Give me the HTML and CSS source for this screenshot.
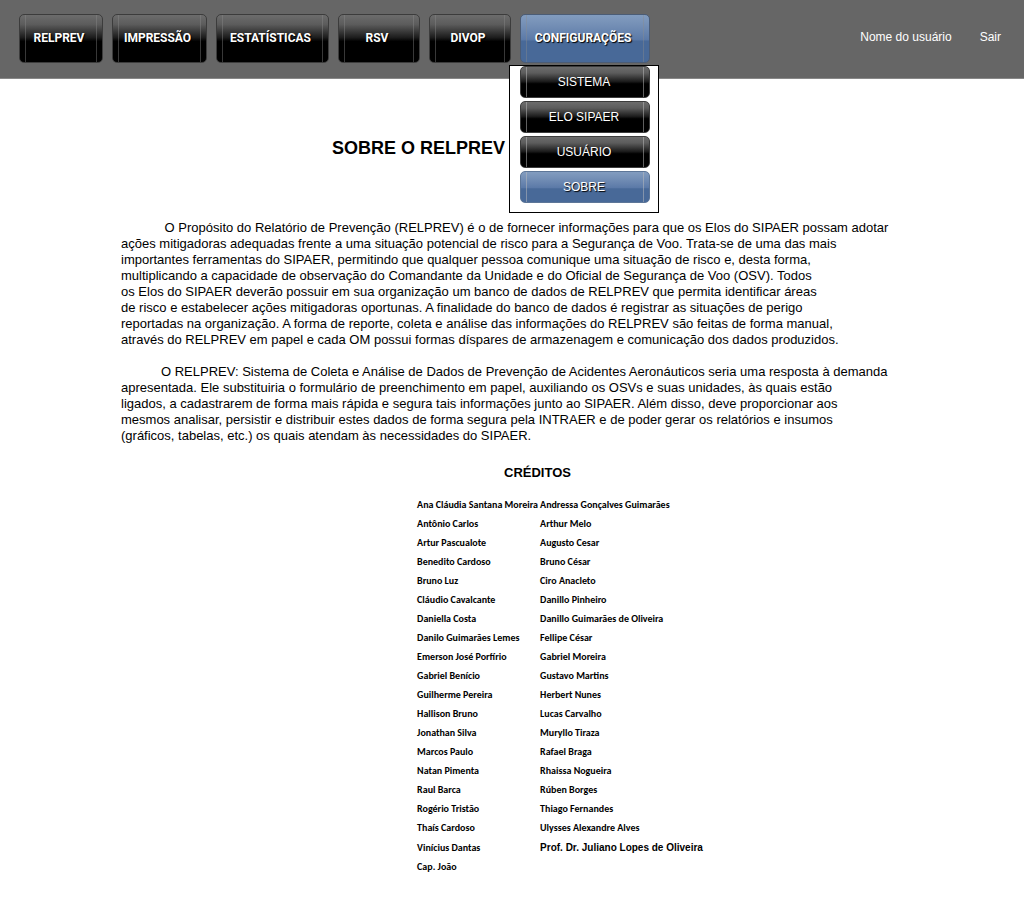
FILE: index.html
```html
<!DOCTYPE html>
<html lang="pt-BR">
<head>
<meta charset="utf-8">
<title>Sobre o RELPREV</title>
<link rel="stylesheet" href="styles.css">
</head>
<body>
<header class="topbar">
  <nav>
    <ul class="menu">
      <li><a class="tab tab-relprev" href="#">RELPREV</a></li>
      <li><a class="tab tab-impressao" href="#">IMPRESSÃO</a></li>
      <li><a class="tab tab-estatisticas" href="#">ESTATÍSTICAS</a></li>
      <li><a class="tab" href="#">RSV</a></li>
      <li><a class="tab" href="#">DIVOP</a></li>
      <li class="has-submenu">
        <a class="tab tab-config active" href="#">CONFIGURAÇÕES</a>
        <ul class="submenu">
          <li><a class="subitem" href="#">SISTEMA</a></li>
          <li><a class="subitem" href="#">ELO SIPAER</a></li>
          <li><a class="subitem" href="#">USUÁRIO</a></li>
          <li><a class="subitem active" href="#">SOBRE</a></li>
        </ul>
      </li>
    </ul>
  </nav>
  <div class="user">
    <a href="#">Nome do usuário</a>
    <a href="#">Sair</a>
  </div>
</header>
<main class="content">
  <h1 class="title">SOBRE O RELPREV</h1>
  <p class="text">&nbsp;O Propósito do Relatório de Prevenção (RELPREV) é o de fornecer informações para que os Elos do SIPAER possam adotar<br>
ações mitigadoras adequadas frente a uma situação potencial de risco para a Segurança de Voo. Trata-se de uma das mais<br>
importantes ferramentas do SIPAER, permitindo que qualquer pessoa comunique uma situação de risco e, desta forma,<br>
multiplicando a capacidade de observação do Comandante da Unidade e do Oficial de Segurança de Voo (OSV). Todos<br>
os Elos do SIPAER deverão possuir em sua organização um banco de dados de RELPREV que permita identificar áreas<br>
de risco e estabelecer ações mitigadoras oportunas. A finalidade do banco de dados é registrar as situações de perigo<br>
reportadas na organização. A forma de reporte, coleta e análise das informações do RELPREV são feitas de forma manual,<br>
através do RELPREV em papel e cada OM possui formas díspares de armazenagem e comunicação dos dados produzidos.</p>
  <p class="text">O RELPREV: Sistema de Coleta e Análise de Dados de Prevenção de Acidentes Aeronáuticos seria uma resposta à demanda<br>
apresentada. Ele substituiria o formulário de preenchimento em papel, auxiliando os OSVs e suas unidades, às quais estão<br>
ligados, a cadastrarem de forma mais rápida e segura tais informações junto ao SIPAER. Além disso, deve proporcionar aos<br>
mesmos analisar, persistir e distribuir estes dados de forma segura pela INTRAER e de poder gerar os relatórios e insumos<br>
(gráficos, tabelas, etc.) os quais atendam às necessidades do SIPAER.</p>
  <h2 class="subtitle">CRÉDITOS</h2>
  <div class="credits-wrap">
    <table class="credits">
      <tbody>
        <tr><td>Ana Cláudia Santana Moreira</td><td>Andressa Gonçalves Guimarães</td></tr>
        <tr><td>Antônio Carlos</td><td>Arthur Melo</td></tr>
        <tr><td>Artur Pascualote</td><td>Augusto Cesar</td></tr>
        <tr><td>Benedito Cardoso</td><td>Bruno César</td></tr>
        <tr><td>Bruno Luz</td><td>Ciro Anacleto</td></tr>
        <tr><td>Cláudio Cavalcante</td><td>Danillo Pinheiro</td></tr>
        <tr><td>Daniella Costa</td><td>Danillo Guimarães de Oliveira</td></tr>
        <tr><td>Danilo Guimarães Lemes</td><td>Fellipe César</td></tr>
        <tr><td>Emerson José Porfírio</td><td>Gabriel Moreira</td></tr>
        <tr><td>Gabriel Benício</td><td>Gustavo Martins</td></tr>
        <tr><td>Guilherme Pereira</td><td>Herbert Nunes</td></tr>
        <tr><td>Hallison Bruno</td><td>Lucas Carvalho</td></tr>
        <tr><td>Jonathan Silva</td><td>Muryllo Tiraza</td></tr>
        <tr><td>Marcos Paulo</td><td>Rafael Braga</td></tr>
        <tr><td>Natan Pimenta</td><td>Rhaissa Nogueira</td></tr>
        <tr><td>Raul Barca</td><td>Rúben Borges</td></tr>
        <tr><td>Rogério Tristão</td><td>Thiago Fernandes</td></tr>
        <tr><td>Thaís Cardoso</td><td>Ulysses Alexandre Alves</td></tr>
        <tr><td>Vinícius Dantas</td><td class="professor">Prof. Dr. Juliano Lopes de Oliveira</td></tr>
        <tr><td>Cap. João</td><td></td></tr>
      </tbody>
    </table>
  </div>
</main>
</body>
</html>
```
FILE: styles.css
```css
* { box-sizing: border-box; }

body {
  margin: 0;
  background: #fff;
  color: #000;
  font-family: "Liberation Sans", Arial, sans-serif;
  font-size: 13px;
  line-height: 16px;
}

a { text-decoration: none; }

.topbar {
  display: flex;
  justify-content: space-between;
  align-items: flex-start;
  min-height: 79px;
  padding: 14px 23px 0 19px;
  background: #666;
  border-bottom: 1px solid #888;
}

.menu,
.submenu {
  margin: 0;
  padding: 0;
  list-style: none;
}

.menu {
  display: flex;
  gap: 9px;
}

.has-submenu { position: relative; }

.tab,
.subitem {
  position: relative;
  display: block;
  border: 1px solid #3c3c3c;
  border-radius: 5px;
  background: linear-gradient(#6c6c6c 0%, #5c5c5c 20%, #1c1c1c 48%, #000 56%);
  color: #fff;
  font-size: 12px;
  text-align: center;
  text-shadow: 1px 1px 1px #000;
  white-space: nowrap;
}

.tab {
  min-width: 82px;
  height: 49px;
  padding-right: 4px;
  font-family: Roboto, "Liberation Sans", sans-serif;
  line-height: 46px;
  font-weight: bold;
}

.tab-relprev { min-width: 84px; }
.tab-impressao { min-width: 95px; }
.tab-estatisticas { min-width: 113px; }
.tab-config { min-width: 130px; }

/* Thin vertical highlights near both ends of a button */
.tab::before,
.subitem::before {
  content: "";
  position: absolute;
  inset: 0 5px;
  border: solid rgba(140, 140, 140, 0.4);
  border-width: 0 1px;
}

.tab.active,
.subitem.active {
  border-color: #4b5c75;
  background: linear-gradient(#829cbf 0%, #7590b6 20%, #5c7aa8 52%, #486998 56%);
}

.submenu {
  position: absolute;
  top: 51px;
  left: -11px;
  z-index: 1;
  display: grid;
  gap: 3px;
  width: 150px;
  padding: 0 8px 9px 10px;
  border: 1px solid #000;
  background: #fff;
}

.subitem {
  height: 32px;
  padding-right: 2px;
  line-height: 30px;
}

.subitem::before { border-color: rgba(190, 190, 190, 0.5); }

.subitem.active { border-color: #5d7698; }

.user {
  display: flex;
  gap: 28px;
  padding-top: 15px;
  font-size: 12px;
}

.user a { color: #fff; }

.content { padding: 58px 70px 24px 121px; }

.title {
  margin: 0 0 61px;
  padding-right: 238px;
  font-size: 18px;
  line-height: 22px;
  text-align: center;
}

.text {
  margin: 0 0 16px;
  text-indent: 40px;
  white-space: nowrap;
}

.subtitle {
  margin: 20px 0 13px;
  font-size: 13px;
  line-height: 18px;
  text-align: center;
}

.credits-wrap {
  display: flex;
  justify-content: center;
  padding-left: 45px;
}

.credits {
  border-collapse: collapse;
  font-family: Carlito, Calibri, Lato, sans-serif;
  font-size: 10px;
  font-weight: bold;
  line-height: 19px;
}

.credits td {
  min-width: 123px;
  height: 19px;
  padding: 0;
  white-space: nowrap;
}

.credits .professor {
  height: 20px;
  font-family: "Liberation Sans", Arial, sans-serif;
}
```
